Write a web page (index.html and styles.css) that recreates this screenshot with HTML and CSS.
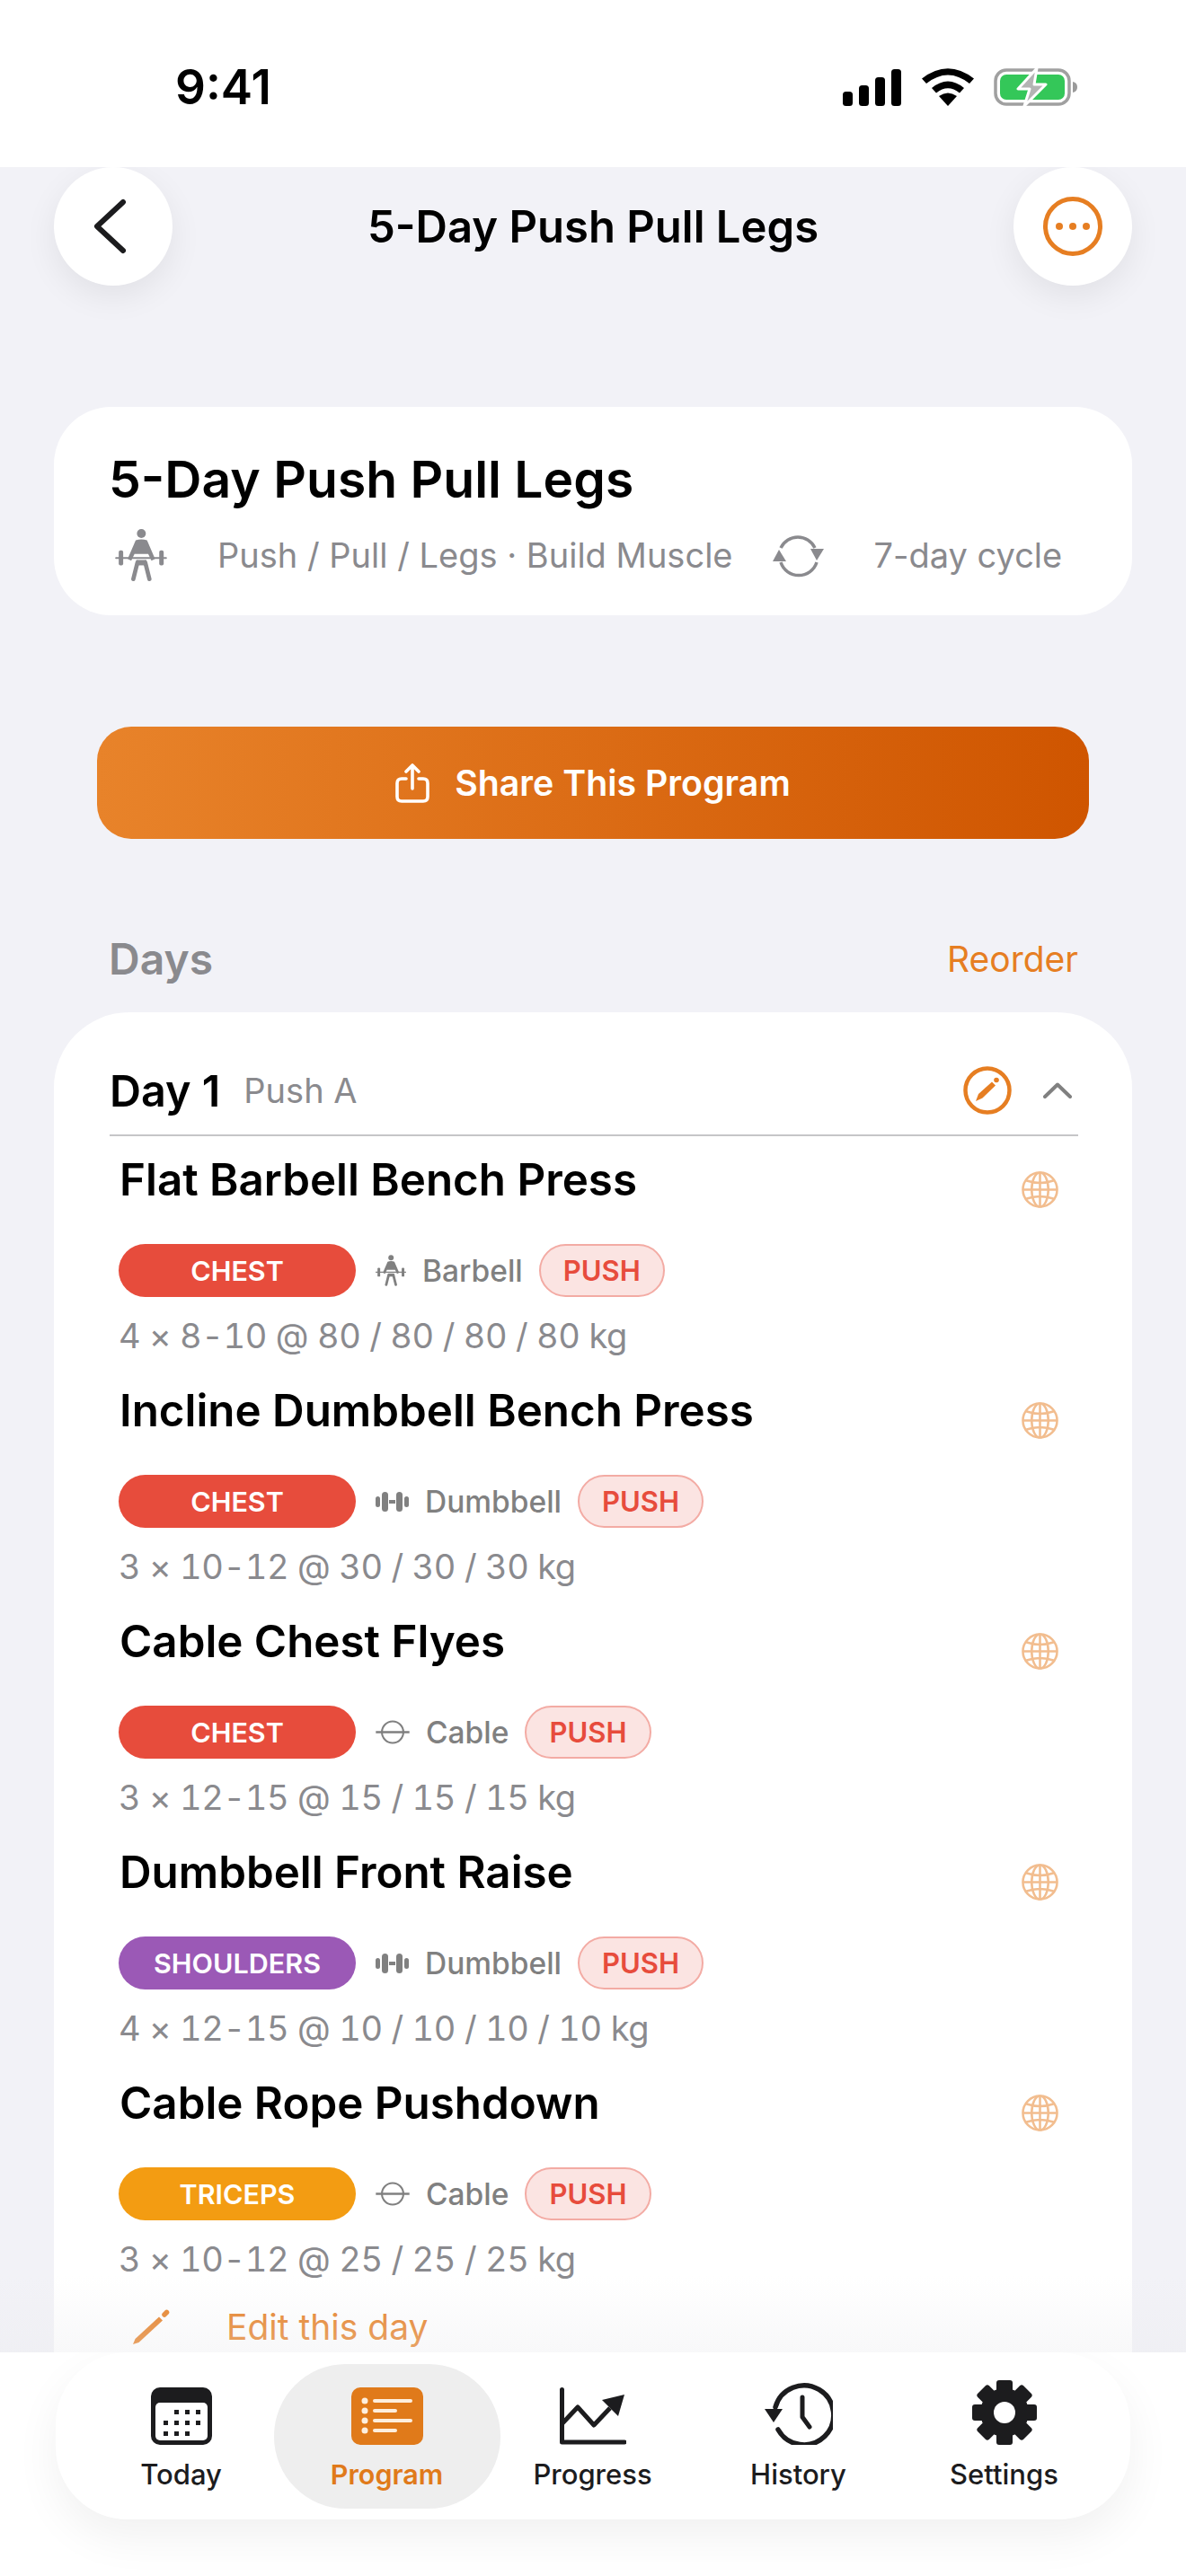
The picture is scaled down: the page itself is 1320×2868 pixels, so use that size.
FILE: index.html
```html
<!DOCTYPE html>
<html lang="en">
<head>
  <meta charset="UTF-8" />
  <meta name="viewport" content="width=device-width, initial-scale=1.0"/>
  <title>5-Day Push Pull Legs</title>
  <link rel="stylesheet" href="styles.css">
</head>
<body>

  <svg class="sprite" aria-hidden="true">
    <symbol id="lifter" viewBox="0 0 172 175">
      <circle cx="87" cy="15" r="15" fill="currentColor"/>
      <path d="M68 38 Q87 32 106 38 L133 100 L121 106 L110 84 L64 84 L53 106 L41 100Z" fill="currentColor"/>
      <path d="M2 97H170" stroke="currentColor" stroke-width="6" stroke-linecap="round"/>
      <rect x="11" y="72" width="15" height="50" rx="6" fill="currentColor"/>
      <rect x="147" y="72" width="15" height="50" rx="6" fill="currentColor"/>
      <path d="M74 112L60 168M100 112L114 168" stroke="currentColor" stroke-width="14" stroke-linecap="round" fill="none"/>
      <path d="M70 104H104V122H70Z" fill="currentColor"/>
    </symbol>
    <symbol id="dumbbell" viewBox="0 0 37 22">
      <rect x="0" y="5" width="5" height="12" rx="2.5" fill="currentColor"/>
      <rect x="7" y="0" width="7" height="22" rx="3.5" fill="currentColor"/>
      <rect x="15" y="9" width="7" height="4" fill="currentColor"/>
      <rect x="23" y="0" width="7" height="22" rx="3.5" fill="currentColor"/>
      <rect x="32" y="5" width="5" height="12" rx="2.5" fill="currentColor"/>
    </symbol>
    <symbol id="cable" viewBox="0 0 36 26">
      <circle cx="18" cy="13" r="11.5" fill="none" stroke="currentColor" stroke-width="2"/>
      <path d="M0 13H36" stroke="currentColor" stroke-width="2.4"/>
    </symbol>
    <symbol id="globe" viewBox="0 0 42 42">
      <g fill="none" stroke="currentColor" stroke-width="2.6">
        <circle cx="21" cy="21" r="19.5"/>
        <ellipse cx="21" cy="21" rx="9.5" ry="19.5"/>
        <path d="M21 1.5V40.5M1.5 21H40.5M5 10.5Q21 16 37 10.5M5 31.5Q21 26 37 31.5"/>
      </g>
    </symbol>
  </svg>

  <header class="status">
    <span class="time">9:41</span>
    <div class="status-icons">
      <svg width="66" height="41" viewBox="0 0 66 41" fill="#000">
        <rect x="0" y="25" width="11" height="16" rx="3.5"/>
        <rect x="18" y="18" width="11" height="23" rx="3.5"/>
        <rect x="36" y="9" width="11" height="32" rx="3.5"/>
        <rect x="54" y="0" width="11" height="41" rx="3.5"/>
      </svg>
      <svg width="58" height="42" viewBox="0 0 58 42" fill="#000">
        <path d="M29 42L19 31Q29 24 39 31Z"/>
        <path d="M11 22Q29 7 47 22L42 27.5Q29 17 16 27.5Z"/>
        <path d="M0 11.500Q29 -11 58 11.500L53 17Q29 -2 5 17Z"/>
      </svg>
      <svg width="94" height="44" viewBox="0 0 94 44">
        <rect x="2" y="3" width="82" height="38" rx="12" fill="none" stroke="#a0a0a0" stroke-width="3.500"/>
        <rect x="7" y="8" width="72" height="28" rx="7" fill="#34c759"/>
        <path d="M88 16Q93 17 93 22Q93 27 88 28Z" fill="#9a9a9a"/>
        <path d="M48 1L27 24H40L34 43L58 19H45Z" fill="#b4b4b4" stroke="#fff" stroke-width="3" stroke-linejoin="round"/>
      </svg>
    </div>
  </header>

  <main class="screen">
    <div class="nav">
      <button class="round-btn" type="button">
        <svg class="back-icon" width="40" height="64" viewBox="0 0 40 64"><path d="M35 5L6 32L35 59" fill="none" stroke="#1c1c1e" stroke-width="6" stroke-linecap="round" stroke-linejoin="round"/></svg>
      </button>
      <h1 class="nav-title">5-Day Push Pull Legs</h1>
      <button class="round-btn" type="button">
        <svg width="68" height="68" viewBox="0 0 68 68">
          <circle cx="34" cy="34" r="30.500" fill="none" stroke="#e67e22" stroke-width="5"/>
          <circle cx="19" cy="34" r="4" fill="#e67e22"/>
          <circle cx="34" cy="34" r="4" fill="#e67e22"/>
          <circle cx="49" cy="34" r="4" fill="#e67e22"/>
        </svg>
      </button>
    </div>

    <section class="summary">
      <h2 class="summary-title">5-Day Push Pull Legs</h2>
      <div class="summary-meta">
        <svg class="meta-icon" width="58" height="58"><use href="#lifter"/></svg>
        <span class="meta-goal">Push / Pull / Legs · Build Muscle</span>
        <svg class="meta-icon" width="60" height="56" viewBox="0 0 60 56">
          <path d="M11 20A21 21 0 0 1 49 20" fill="none" stroke="currentColor" stroke-width="3.500"/>
          <path d="M51 36A21 21 0 0 1 11 36" fill="none" stroke="currentColor" stroke-width="3.500"/>
          <path d="M44 21H59L51 34Z" fill="currentColor"/>
          <path d="M2 35H17L9 22Z" fill="currentColor"/>
        </svg>
        <span class="meta-cycle">7-day cycle</span>
      </div>
    </section>

    <button class="share" type="button">
      <svg width="38" height="44" viewBox="0 0 38 44" fill="none" stroke="#fff" stroke-width="3.600" stroke-linecap="round" stroke-linejoin="round">
        <path d="M12 17H7Q2 17 2 22V37Q2 42 7 42H31Q36 42 36 37V22Q36 17 31 17H26"/>
        <path d="M19 28V3M12 9L19 2L26 9"/>
      </svg>
      Share This Program
    </button>

    <div class="section-head">
      <h3 class="section-title">Days</h3>
      <span class="section-link">Reorder</span>
    </div>

    <section class="day">
      <div class="day-head">
        <span class="day-name">Day 1</span>
        <span class="day-sub">Push A</span>
        <svg class="day-edit" width="54" height="54" viewBox="0 0 54 54">
          <circle cx="27" cy="27" r="24.500" fill="none" stroke="#e67e22" stroke-width="4.500"/>
          <path d="M14 39L17 31L32 17.500L36 21.500L21.500 35.500Z" fill="#e67e22"/>
          <circle cx="37" cy="15.500" r="2.800" fill="#e67e22"/>
        </svg>
        <svg class="day-toggle" width="32" height="18" viewBox="0 0 32 18"><path d="M2 16L16 2.500L30 16" fill="none" stroke="#808080" stroke-width="4" stroke-linecap="round" stroke-linejoin="round"/></svg>
      </div>

      <div class="exercises">
        <article class="exercise">
          <div class="ex-top"><h4 class="ex-name">Flat Barbell Bench Press</h4><svg class="globe" width="41" height="41"><use href="#globe"/></svg></div>
          <div class="ex-tags">
            <span class="muscle chest">CHEST</span>
            <svg class="equip-icon" width="34" height="35"><use href="#lifter"/></svg>
            <span class="equip">Barbell</span>
            <span class="kind">PUSH</span>
          </div>
          <p class="ex-sets">4 × 8-10 @ 80 / 80 / 80 / 80 kg</p>
        </article>

        <article class="exercise">
          <div class="ex-top"><h4 class="ex-name">Incline Dumbbell Bench Press</h4><svg class="globe" width="41" height="41"><use href="#globe"/></svg></div>
          <div class="ex-tags">
            <span class="muscle chest">CHEST</span>
            <svg class="equip-icon" width="37" height="22"><use href="#dumbbell"/></svg>
            <span class="equip">Dumbbell</span>
            <span class="kind">PUSH</span>
          </div>
          <p class="ex-sets">3 × 10-12 @ 30 / 30 / 30 kg</p>
        </article>

        <article class="exercise">
          <div class="ex-top"><h4 class="ex-name">Cable Chest Flyes</h4><svg class="globe" width="41" height="41"><use href="#globe"/></svg></div>
          <div class="ex-tags">
            <span class="muscle chest">CHEST</span>
            <svg class="equip-icon" width="38" height="27"><use href="#cable"/></svg>
            <span class="equip">Cable</span>
            <span class="kind">PUSH</span>
          </div>
          <p class="ex-sets">3 × 12-15 @ 15 / 15 / 15 kg</p>
        </article>

        <article class="exercise">
          <div class="ex-top"><h4 class="ex-name">Dumbbell Front Raise</h4><svg class="globe" width="41" height="41"><use href="#globe"/></svg></div>
          <div class="ex-tags">
            <span class="muscle shoulders">SHOULDERS</span>
            <svg class="equip-icon" width="37" height="22"><use href="#dumbbell"/></svg>
            <span class="equip">Dumbbell</span>
            <span class="kind">PUSH</span>
          </div>
          <p class="ex-sets">4 × 12-15 @ 10 / 10 / 10 / 10 kg</p>
        </article>

        <article class="exercise">
          <div class="ex-top"><h4 class="ex-name">Cable Rope Pushdown</h4><svg class="globe" width="41" height="41"><use href="#globe"/></svg></div>
          <div class="ex-tags">
            <span class="muscle triceps">TRICEPS</span>
            <svg class="equip-icon" width="38" height="27"><use href="#cable"/></svg>
            <span class="equip">Cable</span>
            <span class="kind">PUSH</span>
          </div>
          <p class="ex-sets">3 × 10-12 @ 25 / 25 / 25 kg</p>
        </article>
      </div>

      <div class="edit-day">
        <svg width="42" height="40" viewBox="0 0 42 40"><path d="M0 39L2.500 33L29 8.500L33 12.500L6.500 37Z" fill="#e67e22"/><path d="M35 6L37.500 3.500" stroke="#e67e22" stroke-width="5.500" stroke-linecap="round"/></svg>
        <span>Edit this day</span>
      </div>
    </section>

    <div class="fade"></div>
  </main>

  <footer class="bottom">
    <nav class="tabs">
      <a class="tab">
        <svg width="68" height="64" viewBox="0 0 68 64">
          <rect width="68" height="64" rx="10" fill="#1c1c1e"/>
          <rect x="5" y="17" width="58" height="42" rx="5" fill="#fff"/>
          <g fill="#1c1c1e">
            <rect x="26" y="25" width="5" height="5"/><rect x="38" y="25" width="5" height="5"/><rect x="50" y="25" width="5" height="5"/>
            <rect x="14" y="37" width="5" height="5"/><rect x="26" y="37" width="5" height="5"/><rect x="38" y="37" width="5" height="5"/><rect x="50" y="37" width="5" height="5"/>
            <rect x="14" y="49" width="5" height="5"/><rect x="26" y="49" width="5" height="5"/><rect x="38" y="49" width="5" height="5"/>
          </g>
        </svg>
        <span>Today</span>
      </a>
      <a class="tab active">
        <svg width="80" height="64" viewBox="0 0 80 64">
          <rect width="80" height="64" rx="10" fill="#e07a1a"/>
          <g fill="#fdeedd">
            <circle cx="15" cy="15" r="3.500"/><circle cx="15" cy="26" r="3.500"/><circle cx="15" cy="37" r="3.500"/><circle cx="15" cy="48" r="3.500"/>
            <rect x="24" y="13" width="44" height="4" rx="2"/><rect x="24" y="24" width="27" height="4" rx="2"/><rect x="24" y="35" width="44" height="4" rx="2"/><rect x="24" y="46" width="27" height="4" rx="2"/>
          </g>
        </svg>
        <span>Program</span>
      </a>
      <a class="tab">
        <svg width="74" height="64" viewBox="0 0 74 64">
          <path d="M2.500 2.500V61H72" fill="none" stroke="#1c1c1e" stroke-width="5" stroke-linecap="round" stroke-linejoin="round"/>
          <path d="M3 40L20 22L38 42L56 23" fill="none" stroke="#1c1c1e" stroke-width="5" stroke-linejoin="round"/>
          <path d="M47 14L72 8L65 32Z" fill="#1c1c1e"/>
        </svg>
        <span>Progress</span>
      </a>
      <a class="tab">
        <svg width="76" height="70" viewBox="0 0 76 70">
          <path d="M12 28A33 33 0 1 1 15 53" fill="none" stroke="#1c1c1e" stroke-width="5.500" stroke-linecap="round"/>
          <path d="M0 30H20L10 45Z" fill="#1c1c1e"/>
          <path d="M42 17V39L50 50" fill="none" stroke="#1c1c1e" stroke-width="5" stroke-linecap="round" stroke-linejoin="round"/>
        </svg>
        <span>History</span>
      </a>
      <a class="tab">
        <svg width="72" height="72" viewBox="0 0 72 72">
          <g fill="#1c1c1e">
            <circle cx="36" cy="36" r="27"/>
            <rect x="27" y="0" width="18" height="72" rx="3"/>
            <rect x="27" y="0" width="18" height="72" rx="3" transform="rotate(45 36 36)"/>
            <rect x="27" y="0" width="18" height="72" rx="3" transform="rotate(90 36 36)"/>
            <rect x="27" y="0" width="18" height="72" rx="3" transform="rotate(135 36 36)"/>
          </g>
          <circle cx="36" cy="36" r="12" fill="#fff"/>
        </svg>
        <span>Settings</span>
      </a>
    </nav>
  </footer>

</body>
</html>
```

FILE: styles.css
```css
* {
  box-sizing: border-box;
}

body {
  margin: 0;
  width: 1320px;
  height: 2868px;
  overflow: hidden;
  display: flex;
  flex-direction: column;
  background: #fff;
  color: #000;
  font-family: Inter, "Noto Sans", sans-serif;
}

h1, h2, h3, h4, p {
  margin: 0;
}

.sprite {
  position: absolute;
  width: 0;
  height: 0;
}

/* status bar */
.status {
  flex: 0 0 186px;
  display: flex;
  justify-content: space-between;
  align-items: flex-start;
  padding: 66px 120px 0 195px;
  background: #fff;
}

.time {
  font-size: 53px;
  line-height: 62px;
  font-weight: 600;
}

.status-icons {
  display: flex;
  align-items: center;
  gap: 22px;
  margin-top: 9px;
}

/* main area */
.screen {
  flex: 1;
  position: relative;
  overflow: hidden;
  background: #f2f2f7;
}

.nav {
  display: flex;
  align-items: center;
  justify-content: space-between;
  padding: 0 60px;
}

.round-btn {
  width: 132px;
  height: 132px;
  display: flex;
  align-items: center;
  justify-content: center;
  padding: 0;
  border: none;
  border-radius: 50%;
  background: #fff;
  box-shadow: 0 12px 36px rgba(0,0,0,0.07);
}

.back-icon {
  margin-right: 8px;
}

.nav-title {
  margin-top: 2px;
  font-size: 49px;
  font-weight: 600;
  line-height: 60px;
}

.summary {
  margin: 135px 60px 0;
  height: 232px;
  padding: 46px 60px 0 61px;
  background: #fff;
  border-radius: 64px;
}

.summary-title {
  font-size: 57px;
  line-height: 70px;
  font-weight: 600;
}

.summary-meta {
  display: flex;
  align-items: center;
  margin-top: 20px;
  padding-left: 7px;
  color: #8a8a8e;
  font-size: 38px;
}

.meta-icon {
  flex: none;
}

.meta-goal {
  margin: 0 42px 0 56px;
  white-space: nowrap;
}

.meta-cycle {
  margin-left: 55px;
  white-space: nowrap;
}

.share {
  display: flex;
  align-items: center;
  justify-content: center;
  gap: 28px;
  margin: 124px 108px 0;
  width: 1104px;
  height: 125px;
  border: none;
  border-radius: 38px;
  background: linear-gradient(90deg, #e8832a, #cf5500);
  color: #fff;
  font-family: inherit;
  font-size: 39.300px;
  font-weight: 600;
}

.section-head {
  display: flex;
  align-items: center;
  justify-content: space-between;
  margin-top: 106px;
  padding: 0 120px 0 121px;
  height: 54px;
}

.section-title {
  font-size: 48px;
  font-weight: 600;
  color: #8a8a8e;
}

.section-link {
  font-size: 39px;
  color: #e67e22;
}

/* day card */
.day {
  margin: 33px 60px 0;
  height: 1600px;
  padding: 0 60px 0 62px;
  background: #fff;
  border-radius: 84px;
}

.day-head {
  display: flex;
  align-items: center;
  height: 138px;
  padding-top: 38px;
  border-bottom: 2px solid #c6c6c8;
}

.day-name {
  font-size: 48.500px;
  font-weight: 600;
}

.day-sub {
  margin-left: 26px;
  font-size: 38px;
  color: #8a8a8e;
}

.day-edit {
  margin-left: auto;
}

.day-toggle {
  margin: 0 7px 0 35px;
}

.exercises {
  padding-top: 15px;
}

.exercise {
  height: 257px;
  padding-left: 10px;
}

.ex-top {
  display: flex;
  justify-content: space-between;
  height: 66px;
}

.ex-name {
  margin-left: 1px;
  font-size: 49.300px;
  line-height: 66px;
  font-weight: 600;
}

.globe {
  margin: 24px 22px 0 0;
  color: #e67e22;
  opacity: 0.5;
}

.ex-tags {
  display: flex;
  align-items: center;
  margin-top: 39px;
  height: 59px;
}

.muscle {
  flex: 0 0 264px;
  height: 59px;
  display: flex;
  align-items: center;
  justify-content: center;
  border-radius: 30px;
  color: #fff;
  font-size: 30.500px;
  font-weight: 600;
}

.chest {
  background: #e74c3c;
}

.shoulders {
  background: #9b59b6;
}

.triceps {
  background: #f39c12;
}

.equip-icon {
  flex: none;
  margin-left: 22px;
  color: #808080;
}

.equip {
  margin: 0 18px 0 18px;
  font-size: 33.500px;
  font-weight: 500;
  color: #808080;
}

.kind {
  height: 59px;
  display: flex;
  align-items: center;
  padding: 0 25px;
  border: 2.5px solid #f3aba4;
  border-radius: 30px;
  background: #fbe4e2;
  color: #e74c3c;
  font-size: 31px;
  font-weight: 600;
}

.ex-sets {
  margin-top: 14px;
  font-size: 38px;
  line-height: 58px;
  letter-spacing: -0.4px;
  color: #8a8a8e;
  font-feature-settings: "tnum";
}

.edit-day {
  display: flex;
  align-items: center;
  gap: 62px;
  margin-left: 26px;
  margin-top: 2px;
  color: #e67e22;
  font-size: 39px;
}

.fade {
  position: absolute;
  left: 0;
  right: 0;
  bottom: 0;
  height: 85px;
  background: linear-gradient(rgba(235,235,238,0), rgba(235,235,238,0.35));
}

/* tab bar */
.bottom {
  flex: 0 0 249px;
  padding: 0 62px;
  background: #fff;
}

.tabs {
  display: flex;
  align-items: center;
  height: 186px;
  padding: 0 24px 0 25px;
  border-radius: 80px;
  background: #fff;
  box-shadow: 0 20px 50px rgba(0,0,0,0.06);
}

.tab {
  flex: 0 0 229px;
  display: flex;
  flex-direction: column;
  align-items: center;
  justify-content: flex-end;
  height: 161px;
  padding-bottom: 19px;
  color: #1c1c1e;
  font-size: 31px;
  font-weight: 500;
}

.tab span {
  margin-top: 14px;
  line-height: 38px;
}

.tab.active {
  flex-basis: 252px;
  margin: 0 -11.5px;
  border-radius: 80px;
  background: #eeeeee;
  color: #e07a1a;
  font-size: 30.500px;
  font-weight: 600;
}
```
